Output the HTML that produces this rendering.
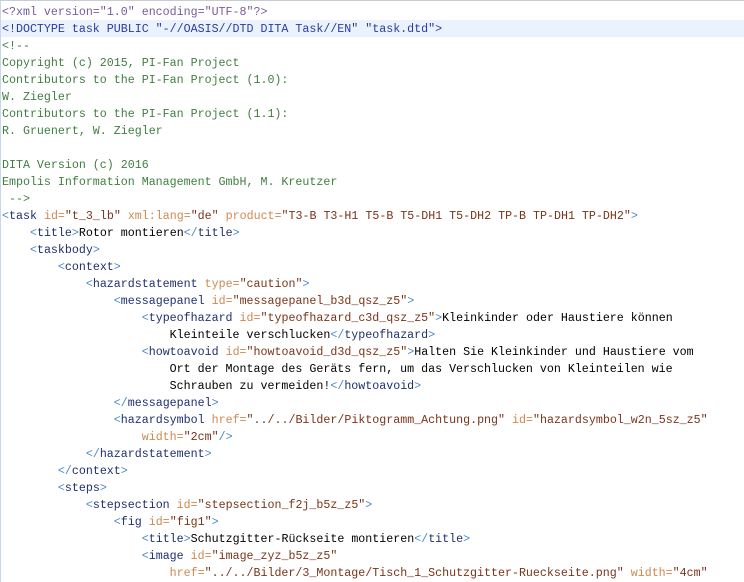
<!DOCTYPE html>
<html><head><meta charset="UTF-8"><style>
html,body{margin:0;padding:0;background:#fff;width:744px;height:582px;overflow:hidden}
body{position:relative;border-top:1px solid #c8ccd0;border-left:1px solid #c9d8e8;box-sizing:border-box}
.hl{position:absolute;left:0;right:0;top:19px;height:17px;background:#eaf3fd}
pre{position:absolute;left:1px;top:3px;margin:0;font-family:"Liberation Mono",monospace;font-size:11.65px;line-height:17px;color:#000;white-space:pre}
.b{color:#4a8ac8}.t{color:#1f3070}.a{color:#d08850}.v{color:#7a3418}.c{color:#3f7f3f}.x{color:#7a5a9a}.d{color:#2a3aa0}
</style></head><body><div class="hl"></div><pre><span class="x">&lt;?xml version="1.0" encoding="UTF-8"?&gt;</span>
<span class="d">&lt;!DOCTYPE task PUBLIC "-//OASIS//DTD DITA Task//EN" "task.dtd"&gt;</span>
<span class="c">&lt;!--
Copyright (c) 2015, PI-Fan Project
Contributors to the PI-Fan Project (1.0):
W. Ziegler
Contributors to the PI-Fan Project (1.1):
R. Gruenert, W. Ziegler

DITA Version (c) 2016
Empolis Information Management GmbH, M. Kreutzer
 --&gt;</span>
<span class="b">&lt;</span><span class="t">task</span> <span class="a">id=</span><span class="v">"t_3_lb"</span> <span class="a">xml:lang=</span><span class="v">"de"</span> <span class="a">product=</span><span class="v">"T3-B T3-H1 T5-B T5-DH1 T5-DH2 TP-B TP-DH1 TP-DH2"</span><span class="b">&gt;</span>
    <span class="b">&lt;</span><span class="t">title</span><span class="b">&gt;</span>Rotor montieren<span class="b">&lt;/</span><span class="t">title</span><span class="b">&gt;</span>
    <span class="b">&lt;</span><span class="t">taskbody</span><span class="b">&gt;</span>
        <span class="b">&lt;</span><span class="t">context</span><span class="b">&gt;</span>
            <span class="b">&lt;</span><span class="t">hazardstatement</span> <span class="a">type=</span><span class="v">"caution"</span><span class="b">&gt;</span>
                <span class="b">&lt;</span><span class="t">messagepanel</span> <span class="a">id=</span><span class="v">"messagepanel_b3d_qsz_z5"</span><span class="b">&gt;</span>
                    <span class="b">&lt;</span><span class="t">typeofhazard</span> <span class="a">id=</span><span class="v">"typeofhazard_c3d_qsz_z5"</span><span class="b">&gt;</span>Kleinkinder oder Haustiere können
                        Kleinteile verschlucken<span class="b">&lt;/</span><span class="t">typeofhazard</span><span class="b">&gt;</span>
                    <span class="b">&lt;</span><span class="t">howtoavoid</span> <span class="a">id=</span><span class="v">"howtoavoid_d3d_qsz_z5"</span><span class="b">&gt;</span>Halten Sie Kleinkinder und Haustiere vom
                        Ort der Montage des Geräts fern, um das Verschlucken von Kleinteilen wie
                        Schrauben zu vermeiden!<span class="b">&lt;/</span><span class="t">howtoavoid</span><span class="b">&gt;</span>
                <span class="b">&lt;/</span><span class="t">messagepanel</span><span class="b">&gt;</span>
                <span class="b">&lt;</span><span class="t">hazardsymbol</span> <span class="a">href=</span><span class="v">"../../Bilder/Piktogramm_Achtung.png"</span> <span class="a">id=</span><span class="v">"hazardsymbol_w2n_5sz_z5"</span>
                    <span class="a">width=</span><span class="v">"2cm"</span><span class="b">/&gt;</span>
            <span class="b">&lt;/</span><span class="t">hazardstatement</span><span class="b">&gt;</span>
        <span class="b">&lt;/</span><span class="t">context</span><span class="b">&gt;</span>
        <span class="b">&lt;</span><span class="t">steps</span><span class="b">&gt;</span>
            <span class="b">&lt;</span><span class="t">stepsection</span> <span class="a">id=</span><span class="v">"stepsection_f2j_b5z_z5"</span><span class="b">&gt;</span>
                <span class="b">&lt;</span><span class="t">fig</span> <span class="a">id=</span><span class="v">"fig1"</span><span class="b">&gt;</span>
                    <span class="b">&lt;</span><span class="t">title</span><span class="b">&gt;</span>Schutzgitter-Rückseite montieren<span class="b">&lt;/</span><span class="t">title</span><span class="b">&gt;</span>
                    <span class="b">&lt;</span><span class="t">image</span> <span class="a">id=</span><span class="v">"image_zyz_b5z_z5"</span>
                        <span class="a">href=</span><span class="v">"../../Bilder/3_Montage/Tisch_1_Schutzgitter-Rueckseite.png"</span> <span class="a">width=</span><span class="v">"4cm"</span>
</pre></body></html>
